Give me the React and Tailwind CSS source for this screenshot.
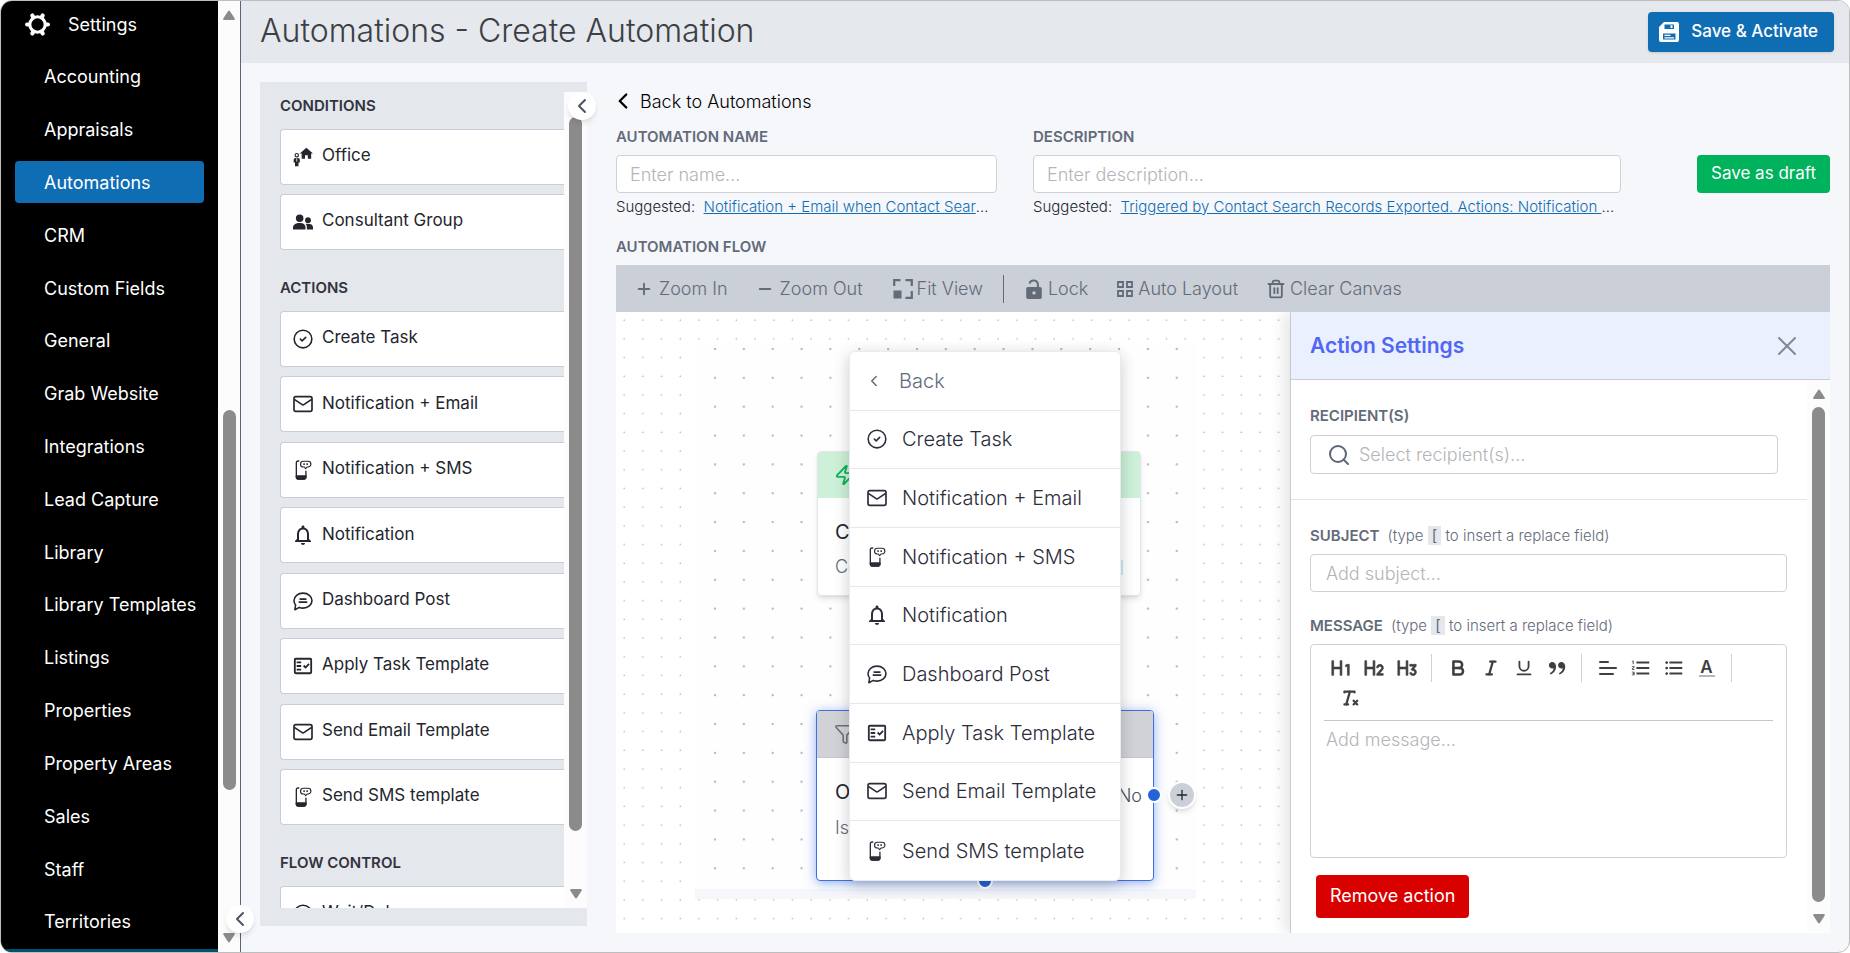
import { ChevronLeft, Filter, Minus, Plus, Search, Trash2, X, Zap } from 'lucide-react';
import { MdFormatListBulleted, MdFormatListNumbered, MdNotificationsNone, MdOutlineFactCheck } from 'react-icons/md';
import { RiDoubleQuotesR, RiH1, RiH2, RiH3 } from 'react-icons/ri';
import { TbBold, TbClearFormatting, TbItalic, TbUnderline } from 'react-icons/tb';

const NAV = [
  'Accounting', 'Appraisals', 'Automations', 'CRM', 'Custom Fields', 'General', 'Grab Website',
  'Integrations', 'Lead Capture', 'Library', 'Library Templates', 'Listings', 'Properties',
  'Property Areas', 'Sales', 'Staff', 'Territories',
];

const CONDITIONS = [
  { label: 'Office', Icon: OfficeIcon },
  { label: 'Consultant Group', Icon: PeopleIcon },
];

const ACTIONS = [
  { label: 'Create Task', Icon: TaskIcon },
  { label: 'Notification + Email', Icon: MailIcon },
  { label: 'Notification + SMS', Icon: SmsIcon },
  { label: 'Notification', Icon: BellIcon },
  { label: 'Dashboard Post', Icon: PostIcon },
  { label: 'Apply Task Template', Icon: FactCheckIcon },
  { label: 'Send Email Template', Icon: MailIcon },
  { label: 'Send SMS template', Icon: SmsIcon },
];

export default function App() {
  return (
    <div className="h-screen min-h-[760px] bg-white font-['Inter','Liberation_Sans',sans-serif] text-[#23262d]">
      <div className="flex h-full overflow-hidden rounded-xl border border-[#bdbdbd] bg-[#f6f7fb]">
        <Sidebar />
        <div className="flex min-w-0 flex-1 flex-col">
          <header className="flex h-[62px] shrink-0 items-center justify-between bg-[#e5e8ec] pr-[15px] pl-[19px]">
            <h1 className="pb-[2px] text-[32px] font-light text-[#3c4045]">Automations - Create Automation</h1>
            <button className="flex h-10 items-center gap-[10px] rounded bg-[#0f6db4] pr-4 pl-[9px] text-[17px] font-medium text-white shadow-sm">
              <SaveIcon className="size-6" />
              Save &amp; Activate
            </button>
          </header>
          <div className="flex min-h-0 flex-1 pb-[19px] pl-[19px]">
            <Palette />
            <Editor />
          </div>
        </div>
      </div>
    </div>
  );
}

function Sidebar() {
  return (
    <aside className="relative flex shrink-0 border-r border-[#5b6478]">
      <div className="flex w-[217px] flex-col bg-black text-[18px] text-white">
        <nav className="flex flex-1 flex-col justify-between px-[14px] pt-[2px] pb-[6px]">
          <a href="#settings" className="flex h-[42px] items-center gap-[18px] pl-[10px]">
            <GearIcon className="size-[25px]" />
            Settings
          </a>
          {NAV.map((item) => (
            <a
              key={item}
              href="#settings"
              className={`flex h-[42px] items-center rounded pl-[29px] ${item === 'Automations' ? 'bg-[#0f6db4]' : ''}`}
            >
              {item}
            </a>
          ))}
        </nav>
        <div className="h-[3px] bg-[#02516f]" />
      </div>
      <ScrollTrack className="w-[22px]">
        <ArrowUp />
        <div className="flex-[391]" />
        <Thumb className="flex-[381]" />
        <div className="flex-[143]" />
        <ArrowDown />
      </ScrollTrack>
      <CollapseButton className="-right-[14px] bottom-[19px]" />
    </aside>
  );
}

function Palette() {
  return (
    <section className="relative mt-[19px] mb-[7px] w-[327px] shrink-0 bg-[#e4e7ec] pt-[10px] pb-[18px]">
      <div className="flex h-full">
        <div className="flex-1 overflow-hidden pl-5">
          <PaletteHeading>Conditions</PaletteHeading>
          <div className="mt-[13px] flex h-[121px] flex-col justify-between">
            {CONDITIONS.map((item) => <PaletteCard key={item.label} {...item} />)}
          </div>
          <div className="mt-6"><PaletteHeading>Actions</PaletteHeading></div>
          <div className="mt-[13px] flex h-[514px] flex-col justify-between">
            {ACTIONS.map((item) => <PaletteCard key={item.label} {...item} />)}
          </div>
          <div className="mt-6"><PaletteHeading>Flow control</PaletteHeading></div>
          <div className="mt-[13px]">
            <PaletteCard label="Wait/Delay" Icon={TaskIcon} />
          </div>
        </div>
        <ScrollTrack>
          <div className="h-4" />
          <Thumb className="flex-1" />
          <div className="h-[58px]" />
          <ArrowDown />
        </ScrollTrack>
      </div>
      <CollapseButton className="top-[10px] -right-[9px]" />
    </section>
  );
}

function PaletteHeading({ children }) {
  return <h2 className="pt-1 text-[15px] leading-5 font-semibold text-[#33333f] uppercase">{children}</h2>;
}

function PaletteCard({ label, Icon }) {
  return (
    <div className="flex h-14 shrink-0 items-center gap-[9px] rounded-l border border-r-0 border-[#c9cdd7] bg-white pb-[2px] pl-3 text-[17px]">
      <Icon className="mt-[2px] size-5" />
      {label}
    </div>
  );
}

function Editor() {
  return (
    <main className="ml-[29px] flex min-w-0 flex-1 flex-col pt-[26px] pr-[19px]">
      <a href="#automations" className="flex h-6 items-center gap-1 text-[18px] font-light text-black">
        <ChevronLeft className="-ml-[6px] size-[26px]" strokeWidth={2.2} />
        Back to Automations
      </a>
      <div className="mt-[14px] flex">
        <div className="grid min-w-0 flex-1 grid-cols-[381fr_588fr] gap-9">
          <Field
            id="name"
            label="Automation name"
            placeholder="Enter name..."
            suggestion="Notification + Email when Contact Search Rec"
          />
          <Field
            id="description"
            label="Description"
            placeholder="Enter description..."
            suggestion="Triggered by Contact Search Records Exported. Actions: Notification + Email"
          />
        </div>
        <button className="mt-7 ml-[76px] h-[38px] w-[133px] rounded bg-[#00b25b] text-[17px] text-white">
          Save as draft
        </button>
      </div>
      <h2 className="mt-5 text-[15px] leading-5 font-semibold text-[#636b79] uppercase">Automation flow</h2>
      <Toolbar />
      <div className="flex min-h-0 flex-1 overflow-hidden bg-white">
        <Canvas />
        <ActionSettings />
      </div>
    </main>
  );
}

function Field({ id, label, placeholder, suggestion }) {
  return (
    <div className="flex min-w-0 flex-col">
      <label htmlFor={id} className="text-[15px] leading-5 font-semibold text-[#636b79] uppercase">{label}</label>
      <input
        id={id}
        type="text"
        placeholder={placeholder}
        className="mt-2 h-[38px] rounded border border-[#cfd1d6] bg-white px-[13px] text-[18px] font-light placeholder:text-[#b3b5b9]"
      />
      <p className="mt-1 truncate pr-1 text-[15px] leading-5 font-light">
        Suggested:&nbsp; <a href="#suggested" className="text-[#0f6db4] underline">{suggestion}</a>
      </p>
    </div>
  );
}

function Toolbar() {
  return (
    <div className="mt-2 flex h-[47px] shrink-0 items-center bg-[#cbcfd7] pl-[19px] text-[18px] font-light text-[#636b79]">
      <ToolButton label="Zoom In"><Plus className="mr-[2px] size-[18px]" strokeWidth={2.5} /></ToolButton>
      <ToolButton label="Zoom Out" className="ml-[28px]"><Minus className="mr-[2px] size-[18px]" strokeWidth={2.5} /></ToolButton>
      <ToolButton label="Fit View" className="ml-[30px]"><FitIcon className="size-5" /></ToolButton>
      <div className="ml-[20px] h-7 w-px bg-[#636b79]" />
      <ToolButton label="Lock" className="ml-[20px]"><LockIcon className="size-5" /></ToolButton>
      <ToolButton label="Auto Layout" className="ml-[28px]"><GridIcon className="size-[18px]" /></ToolButton>
      <ToolButton label="Clear Canvas" className="ml-[28px]"><Trash2 className="size-5" strokeWidth={2.2} /></ToolButton>
    </div>
  );
}

function ToolButton({ label, className = '', children }) {
  return (
    <button className={`flex items-center gap-1 whitespace-nowrap ${className}`}>
      {children}
      {label}
    </button>
  );
}

function Canvas() {
  return (
    <div className="relative min-w-0 flex-1 overflow-hidden">
      <svg className="absolute inset-0 size-full">
        <defs>
          <pattern id="dots" width="18.7" height="18.7" patternUnits="userSpaceOnUse">
            <rect x="7.500" y="7.500" width="1.400" height="1.400" fill="#b4b7bd" />
          </pattern>
          <pattern id="dots-large" x="84" y="22" width="28.860" height="28.850" patternUnits="userSpaceOnUse">
            <rect x="14" y="14" width="2" height="2" fill="#b0b3b8" />
          </pattern>
        </defs>
        <rect width="100%" height="100%" fill="url(#dots)" />
        <rect x="79" y="30" width="501" height="557" fill="#fefefe" />
        <rect x="92" y="32" width="488" height="545" fill="url(#dots-large)" />
        <rect x="79" y="577" width="501" height="10" fill="#f6f7fb" />
      </svg>

      {/* Trigger node */}
      <div className="absolute top-[139px] left-[201px] h-[145px] w-[324px] overflow-hidden rounded border border-[#e3e5e8] bg-white shadow-md">
        <div className="flex h-[46px] items-center bg-[#cdf0d8] pl-4">
          <Zap className="size-[22px] text-[#10b35a]" />
        </div>
        <p className="mt-[22px] pl-[17px] text-[20px] leading-6">Contact</p>
        <div className="mt-[11px] flex justify-between pr-[17px] pl-[17px] text-[18px] leading-6 font-light text-[#636b79]">
          Contact
          <span className="h-[15px] w-10 self-center bg-[#c7ecf5]" />
        </div>
      </div>

      {/* Condition node */}
      <div className="absolute top-[398px] left-[200px] h-[171px] w-[338px] rounded border border-[#3f70dc] bg-white shadow-[0_2px_12px_rgba(37,99,235,0.5)]">
        <div className="flex h-[47px] items-center rounded-t-[2px] border-b border-[#c5c8cc] bg-[#d0d2d5] pl-[17px]">
          <Filter className="size-[22px] text-[#6e7177]" strokeWidth={1.7} />
        </div>
        <div className="mt-[22px] flex h-6 justify-between pr-[11px] pl-[18px] text-[20px] leading-6">
          Office
          <span className="pt-1 text-[18px] font-light text-[#4c525e]">No</span>
        </div>
        <p className="mt-3 pl-[18px] text-[18px] leading-6 font-light text-[#636b79]">Is</p>
      </div>
      <span className="absolute top-[475px] left-[530px] size-4 rounded-full border-2 border-white bg-[#2563d8]" />
      <span className="absolute top-[561px] left-[361px] size-4 rounded-full border-2 border-white bg-[#2563d8]" />
      <button
        aria-label="Add step"
        className="absolute top-[469px] left-[552px] flex size-7 items-center justify-center rounded-full border-2 border-white bg-[#cbcfd7] shadow-md"
      >
        <Plus className="size-4" />
      </button>

      {/* Action picker */}
      <div className="absolute top-[39px] left-[233px] grid h-[530px] w-[272px] grid-rows-9 divide-y divide-[#e6e8ee] rounded-md border border-[#e9ebf0] bg-white shadow-[0_4px_16px_rgba(0,0,0,0.2)]">
        <button className="flex items-center gap-4 pl-[15px] text-[20px] font-light text-[#636b79]">
          <ChevronLeft className="size-[18px]" />
          Back
        </button>
        {ACTIONS.map(({ label, Icon }) => (
          <button key={label} className="flex items-center gap-[15px] pl-[17px] text-[20px] font-light whitespace-nowrap text-[#2c2c3a]">
            <Icon className="size-5 shrink-0" />
            {label}
          </button>
        ))}
      </div>
    </div>
  );
}

function ActionSettings() {
  return (
    <aside className="relative flex w-[540px] shrink-0 flex-col border-l border-[#c6cad4] bg-white shadow-[-6px_0_14px_rgba(0,0,0,0.1)]">
      <div className="flex h-[68px] shrink-0 items-center justify-between border-b border-[#c6cddc] bg-[#eaf0fd] pr-[29px] pl-[19px]">
        <h2 className="text-[21px] font-semibold text-[#5266f5]">Action Settings</h2>
        <button aria-label="Close" className="text-[#85888e]"><X className="-mr-[2px] size-8" strokeWidth={1.5} /></button>
      </div>
      <div className="flex min-h-0 flex-1">
        <div className="min-w-0 flex-1 overflow-hidden">
          <div className="border-b border-[#e2e4e8] pt-[26px] pr-[29px] pb-[25px] pl-[19px]">
            <label htmlFor="recipients" className="block text-[15px] leading-5 font-semibold text-[#636b79] uppercase">
              Recipient(s)
            </label>
            <div className="mt-[9px] flex h-[39px] items-center gap-2 rounded border border-[#cfd1d6] pl-4">
              <Search className="size-6 text-[#5c6678]" />
              <input
                id="recipients"
                type="text"
                placeholder="Select recipient(s)..."
                className="min-w-0 flex-1 text-[18px] font-light placeholder:text-[#b3b5b9]"
              />
            </div>
          </div>
          <div className="pt-[26px] pr-5 pl-[19px]">
            <HintLabel id="subject">Subject</HintLabel>
            <input
              id="subject"
              type="text"
              placeholder="Add subject..."
              className="mt-2 h-[38px] w-full rounded border border-[#cfd1d6] px-[15px] text-[18px] font-light placeholder:text-[#b3b5b9]"
            />
            <div className="mt-6"><HintLabel id="message">Message</HintLabel></div>
            <div className="mt-2 flex h-[214px] flex-col rounded border border-[#cfd1d6] px-[13px] pt-[9px]">
              <FormatBar />
              <textarea
                id="message"
                placeholder="Add message..."
                className="w-full flex-1 resize-none px-[2px] pt-[7px] text-[18px] leading-6 font-light placeholder:text-[#b3b5b9]"
              />
            </div>
            <button className="mt-[17px] ml-[6px] h-[43px] rounded bg-[#d90000] px-[14px] pb-[2px] text-[18px] text-white">
              Remove action
            </button>
          </div>
        </div>
        <ScrollTrack>
          <ArrowUp />
          <Thumb className="mt-2 flex-1" />
          <div className="h-3" />
          <ArrowDown />
        </ScrollTrack>
      </div>
    </aside>
  );
}

function HintLabel({ id, children }) {
  return (
    <label htmlFor={id} className="block h-5 text-[15px] leading-5 text-[#636b79]">
      <span className="mr-2 font-semibold uppercase">{children}</span>
      <span className="font-light">
        (type <span className="bg-[#e4e7ec] px-1 font-normal">[</span> to insert a replace field)
      </span>
    </label>
  );
}

function FormatBar() {
  return (
    <div className="flex shrink-0 flex-wrap gap-y-[2px] border-b border-[#c4c6ca] pb-2 text-[#3f3f3f]">
      <FormatGroup>
        <FormatButton label="Heading 1"><RiH1 className="size-[22px] stroke-current" strokeWidth={0.7} /></FormatButton>
        <FormatButton label="Heading 2"><RiH2 className="size-[22px] stroke-current" strokeWidth={0.7} /></FormatButton>
        <FormatButton label="Heading 3"><RiH3 className="size-[22px] stroke-current" strokeWidth={0.7} /></FormatButton>
      </FormatGroup>
      <FormatGroup>
        <FormatButton label="Bold"><TbBold className="size-[22px]" strokeWidth={2.8} /></FormatButton>
        <FormatButton label="Italic"><TbItalic className="size-[22px]" strokeWidth={2.4} /></FormatButton>
        <FormatButton label="Underline"><TbUnderline className="size-[22px]" /></FormatButton>
        <FormatButton label="Quote"><RiDoubleQuotesR className="size-[22px]" /></FormatButton>
      </FormatGroup>
      <FormatGroup>
        <FormatButton label="Align">
          <svg viewBox="0 0 20 20" className="size-5" fill="none" stroke="currentColor" strokeWidth="2" strokeLinecap="round">
            <path d="M2 4h8M2 10h16M2 16h13" />
          </svg>
        </FormatButton>
        <FormatButton label="Numbered list"><MdFormatListNumbered className="size-[22px]" /></FormatButton>
        <FormatButton label="Bulleted list"><MdFormatListBulleted className="size-[22px]" /></FormatButton>
        <FormatButton label="Text colour">
          <span className="w-4 border-b-2 border-[#b8b8b8] text-[17px] leading-4 font-semibold">A</span>
        </FormatButton>
      </FormatGroup>
      <div className="px-2">
        <FormatButton label="Clear formatting"><TbClearFormatting className="size-[22px]" strokeWidth={2.4} /></FormatButton>
      </div>
    </div>
  );
}

function FormatGroup({ children }) {
  return <div className="mr-[9px] flex border-r border-[#cbcfd7] pr-2">{children}</div>;
}

function FormatButton({ label, children }) {
  return <button aria-label={label} className="flex h-7 w-[33px] items-center justify-center">{children}</button>;
}

function ScrollTrack({ className = 'w-[23px]', children }) {
  return <div className={`flex shrink-0 flex-col items-center bg-[#fcfcfc] py-[9px] ${className}`}>{children}</div>;
}

function Thumb({ className }) {
  return <div className={`w-[13px] rounded-full bg-[#8b8b8b] ${className}`} />;
}

function ArrowUp() {
  return (
    <svg viewBox="0 0 12 10" className="h-[10px] w-3 shrink-0 text-[#8b8b8b]" fill="currentColor">
      <path d="M5 1.200a1.200 1.200 0 0 1 2 0l4.600 7A1.100 1.100 0 0 1 10.700 10H1.300a1.100 1.100 0 0 1-.9-1.800z" />
    </svg>
  );
}

function ArrowDown() {
  return <div className="rotate-180"><ArrowUp /></div>;
}

function CollapseButton({ className }) {
  return (
    <button
      aria-label="Collapse"
      className={`absolute z-10 flex size-7 items-center justify-center rounded-full bg-white text-[#4b5563] shadow-md ${className}`}
    >
      <ChevronLeft className="size-6" />
    </button>
  );
}

function GearIcon({ className }) {
  return (
    <svg viewBox="0 0 24 24" className={className} fill="none" stroke="currentColor" strokeLinecap="round">
      <circle cx="12" cy="12" r="7.400" strokeWidth="3" />
      <path strokeWidth="4" d="M20.500 12h1.500M3.500 12H2M16.300 4.600l.7-1.200M7.700 4.600L7 3.400M16.300 19.400l.7 1.200M7.700 19.400L7 20.600" />
    </svg>
  );
}

function SaveIcon({ className }) {
  return (
    <svg viewBox="0 0 24 24" className={className}>
      <path fill="currentColor" d="M7 2h13a2 2 0 0 1 2 2v16a2 2 0 0 1-2 2H4a2 2 0 0 1-2-2V7z" />
      <path fill="#0f6db4" d="M7.500 4.500h9.500v4.500H7.500zM6 13.500h12.500v6H6z" />
      <path fill="currentColor" d="M13.500 5.300h2v2.800h-2zM7.500 14.800h6v1.200h-6zM7.500 17.300h9.500v1.200H7.500z" />
    </svg>
  );
}

function OfficeIcon({ className }) {
  return (
    <svg viewBox="0 0 24 24" className={className} fill="currentColor">
      <path d="M16 1l8 6.800h-2.200V14h-4v-4h-3.400v4h-4V7.800H8.200z" />
      <circle cx="4.500" cy="9.800" r="2" fill="none" stroke="currentColor" strokeWidth="1.400" />
      <path d="M3 13.200h3A2.200 2.200 0 0 1 8.200 15.400V18.500H6.600V23H2.400V18.500H.8V15.400A2.200 2.200 0 0 1 3 13.200z" />
      <path d="M4.500 13.500v4" stroke="#fff" strokeWidth="1" />
    </svg>
  );
}

function PeopleIcon({ className }) {
  return (
    <svg viewBox="0 0 24 24" className={className} fill="currentColor">
      <circle cx="8" cy="7.500" r="4.500" />
      <path d="M0 21v-2.500C0 15 4 13.300 8 13.300s7 1.700 7 5.200V21z" />
      <circle cx="18" cy="9.800" r="3.500" />
      <path d="M16.600 21v-3c0-1.400-.6-2.600-1.500-3.500.9-.3 1.900-.4 2.900-.4 3.200 0 6 1.400 6 4.200V21z" />
    </svg>
  );
}

function TaskIcon({ className }) {
  return (
    <svg viewBox="0 0 24 24" className={className} fill="none" stroke="currentColor" strokeWidth="1.900" strokeLinecap="round" strokeLinejoin="round">
      <circle cx="12" cy="12" r="10.600" />
      <path d="M8.800 12.200l2.200 2.100 4.200-4.300" />
    </svg>
  );
}

function MailIcon({ className }) {
  return (
    <svg viewBox="0 0 24 24" className={className} fill="none" stroke="currentColor" strokeWidth="2" strokeLinejoin="round">
      <rect x="1.200" y="3.200" width="21.600" height="17.600" rx="2.200" />
      <path d="M1.600 6.500l9 6a2.500 2.500 0 0 0 2.800 0l9-6" />
    </svg>
  );
}

function SmsIcon({ className }) {
  return (
    <svg viewBox="0 0 24 24" className={className} fill="none" stroke="currentColor" strokeWidth="1.600" strokeLinejoin="round">
      <path d="M7.500 1.200H6a2 2 0 0 0-2 2v17.600a2 2 0 0 0 2 2h7.500a2 2 0 0 0 2-2V13" />
      <path d="M4 19.200h11.500v1.600a2 2 0 0 1-2 2H6a2 2 0 0 1-2-2z" fill="currentColor" />
      <path d="M12.500 1.500h5.500a3.200 3.200 0 0 1 0 6.900h-1.200l-1.600 2.100-1.600-2.100h-1.100a3.450 3.450 0 0 1 0-6.900z" strokeWidth="1.400" />
      <path d="M13.300 4v1.900M17 4v1.900" strokeWidth="1.700" />
    </svg>
  );
}

// The Material glyphs leave a wide margin in their box, so it is cropped here
function BellIcon({ className }) {
  return <MdNotificationsNone className={className} viewBox="2 2 20 20" />;
}

function FactCheckIcon({ className }) {
  return <MdOutlineFactCheck className={className} viewBox="1 1 22 22" />;
}

function PostIcon({ className }) {
  return (
    <svg viewBox="0 0 24 24" className={className} fill="none" stroke="currentColor" strokeWidth="1.900" strokeLinecap="round" strokeLinejoin="round">
      <path d="M2.200 22.500l.9-5.700C1.900 15.300 1.200 13.500 1.200 11.500c0-5 4.700-9 10.800-9s10.800 4 10.800 9-4.700 9-10.800 9c-1.700 0-3.200-.3-4.500-.8z" />
      <path d="M8.500 9.700h7M7.500 13.300h9" />
    </svg>
  );
}

function FitIcon({ className }) {
  return (
    <svg viewBox="0 0 20 20" className={className} fill="none" stroke="currentColor" strokeWidth="2.200">
      <path d="M1.200 7V1.200H7.500M12.500 1.200h6.300V7M18.800 12v6.800H12.500" />
      <rect x="0.500" y="11.500" width="8" height="8" fill="currentColor" stroke="none" />
    </svg>
  );
}

function LockIcon({ className }) {
  return (
    <svg viewBox="0 0 20 20" className={className}>
      <path d="M5.500 4.500a4.300 4.300 0 0 1 8.400 1V9" fill="none" stroke="currentColor" strokeWidth="2" />
      <path fillRule="evenodd" fill="currentColor" d="M4 8h12a1.800 1.800 0 0 1 1.800 1.800v8.400A1.800 1.800 0 0 1 16 20H4a1.800 1.800 0 0 1-1.800-1.800V9.800A1.800 1.800 0 0 1 4 8zm6 4.200a1.700 1.700 0 1 0 0 3.400 1.700 1.700 0 0 0 0-3.400z" />
    </svg>
  );
}

function GridIcon({ className }) {
  return (
    <svg viewBox="0 0 18 18" className={className} fill="none" stroke="currentColor" strokeWidth="1.800">
      <path d="M2 2h5v5H2zM11 2h5v5h-5zM2 11h5v5H2zM11 11h5v5h-5z" />
    </svg>
  );
}
